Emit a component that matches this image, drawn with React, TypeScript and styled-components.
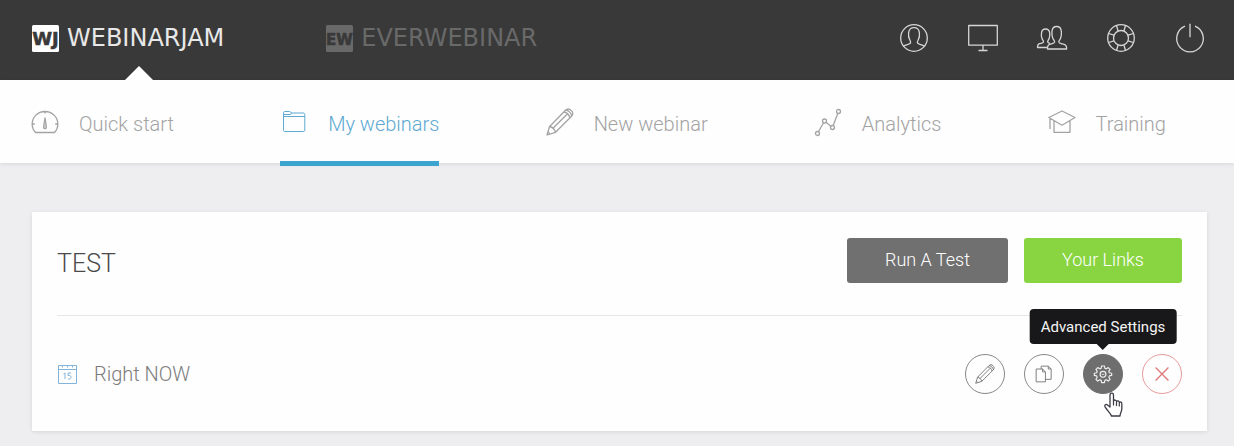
import React from "react";
import styled, { createGlobalStyle, css } from "styled-components";

const GlobalStyle = createGlobalStyle`
  * { box-sizing: border-box; }
  body {
    margin: 0;
    background: #eeeef0;
    font-family: Roboto, "Liberation Sans", sans-serif;
    font-weight: 300;
  }
  button { font: inherit; cursor: pointer; }
`;

const TopBar = styled.header`
  display: flex;
  align-items: center;
  height: 80px;
  padding: 0 29px 4px 32px;
  background: #393939;
`;

const Brands = styled.nav`
  display: flex;
  flex: 1;
  gap: 102px;
  height: 76px;
`;

const Brand = styled.a<{ $active?: boolean }>`
  position: relative;
  display: flex;
  align-items: center;
  gap: 8px;
  color: ${(p) => (p.$active ? "#e8e8e8" : "#696969")};
  font-family: "DejaVu Sans", sans-serif;
  font-size: 24px;
  font-weight: 400;
  line-height: 28px;
  text-decoration: none;

  ${(p) =>
    p.$active &&
    css`
      &::after {
        content: "";
        position: absolute;
        bottom: -4px;
        left: 93px;
        border: 14px solid transparent;
        border-top-width: 0;
        border-bottom-color: #fff;
      }
    `}
`;

const BadgeText = styled.text`
  font-family: "DejaVu Sans", sans-serif;
  font-weight: 700;
  fill: #393939;
  stroke: #393939;
  stroke-width: 0.6;
`;

const Tools = styled.div`
  display: flex;
  gap: 39px;
`;

const ToolButton = styled.button`
  display: flex;
  padding: 0;
  border: 0;
  background: none;
  color: #d6d6d6;
`;

const Icon = styled.svg`
  display: block;
  flex: none;
  overflow: visible;
  fill: none;
  stroke: currentColor;
  stroke-width: 1.3;
  stroke-linejoin: round;
`;

const TabBar = styled.nav`
  display: flex;
  justify-content: space-between;
  height: 83px;
  padding: 0 68px 0 31px;
  background: #fefefe;
  box-shadow: 0 1px 4px rgba(0, 0, 0, 0.1);
`;

const Tab = styled.a<{ $active?: boolean }>`
  position: relative;
  display: flex;
  align-items: center;
  gap: 20px;
  padding-top: 4px;
  color: ${(p) => (p.$active ? "#5fa9d2" : "#a3a3a3")};
  font-size: 20px;
  line-height: 24px;
  text-decoration: none;
  white-space: nowrap;

  ${(p) =>
    p.$active &&
    css`
      &::after {
        content: "";
        position: absolute;
        right: 0;
        bottom: -3px;
        left: 0;
        height: 5px;
        background: #3ba5cf;
      }
    `}
`;

const Page = styled.main`
  padding: 49px 27px 16px 32px;
`;

const Card = styled.section`
  padding: 26px 25px 37px;
  background: #fefefe;
  box-shadow: 0 1px 4px rgba(0, 0, 0, 0.1);
`;

const CardHeader = styled.div`
  display: flex;
  align-items: flex-start;
  gap: 16px;
  padding-bottom: 32px;
  border-bottom: 1px solid #e6e6e6;
`;

const Title = styled.h1`
  flex: 1;
  margin: 0;
  padding-top: 10px;
  color: #4a4a4a;
  font-size: 25px;
  font-weight: 300;
  line-height: 32px;
`;

const ActionButton = styled.button<{ $primary?: boolean }>`
  height: 45px;
  padding: 0 38px 1px;
  border: 0;
  border-radius: 3px;
  background: ${(p) => (p.$primary ? "#89d541" : "#707070")};
  color: #fff;
  font-size: 18px;
  font-weight: 300;
  line-height: 24px;
`;

const Session = styled.div`
  display: flex;
  align-items: center;
  gap: 16px;
  padding-top: 38px;
`;

const SessionName = styled.span`
  flex: 1;
  color: #7c7c7c;
  font-size: 20px;
  line-height: 24px;
`;

const SessionActions = styled.div`
  display: flex;
  gap: 19px;
`;

const ActionSlot = styled.div`
  position: relative;
`;

const tones = {
  plain: css`border-color: #888; background: none; color: #777;`,
  solid: css`border-color: #6e6e6e; background: #6e6e6e; color: #f0f0f0;`,
  danger: css`border-color: #e69a9a; background: none; color: #de7777;`,
};

const RoundButton = styled.button<{ $tone: keyof typeof tones }>`
  display: flex;
  align-items: center;
  justify-content: center;
  width: 40px;
  height: 40px;
  padding: 0;
  border: 1px solid;
  border-radius: 50%;
  ${(p) => tones[p.$tone]}
`;

const Tooltip = styled.span`
  position: absolute;
  bottom: 50px;
  left: 50%;
  padding: 6px 11px 5px;
  transform: translateX(-50%);
  border-radius: 4px;
  background: #18181a;
  color: #f4f4f4;
  font-size: 15px;
  font-weight: 400;
  line-height: 24px;
  white-space: nowrap;

  &::after {
    content: "";
    position: absolute;
    top: 100%;
    left: 50%;
    margin-left: -6px;
    border: 6px solid transparent;
    border-top-color: #18181a;
    border-bottom-width: 0;
  }
`;

const Pointer = styled.svg`
  position: absolute;
  top: 38px;
  left: 20px;
  pointer-events: none;
`;

function Badge({ text, size, color }: { text: string; size: number; color: string }) {
  return (
    <svg width="27" height="27" viewBox="0 0 27 27" aria-hidden="true">
      <rect width="27" height="27" rx="1.5" fill={color} />
      <BadgeText x="13.5" y="20" fontSize={size} textAnchor="middle">
        {text}
      </BadgeText>
    </svg>
  );
}

const PencilShape = () => (
  <>
    <path d="M1 27l2.600-8.500L19.500 2.300c2-2 4-1.400 5.700.1 1.900 1.800 2.200 3.900.3 5.900L9.500 24.300z" />
    <path d="M3.600 18.500c2.700.6 5 2.600 5.900 5.800M6.500 20.800L21.800 5.500M18 4c3 .4 5 2.500 5.800 5.700M20 2.200c3 .7 5 2.700 5.700 5.800M2 24l2 2" />
  </>
);

const tools = [
  {
    label: "Account",
    art: (
      <>
        <circle cx="15" cy="15" r="13.300" />
        <path d="M4.500 23c2.500-1.500 6.200-1.600 6.900-2.800.6-1.300 0-2.300-.7-3.500-1.100-2-1.400-4.500-1.100-7 .4-3.200 2.400-5 5.400-5s5 1.800 5.400 5c.3 2.500 0 5-1.100 7-.7 1.200-1.300 2.200-.7 3.500.7 1.200 4.400 1.300 6.900 2.800" />
      </>
    ),
  },
  {
    label: "Presentation room",
    art: <path d="M.7 2.500h28.600v19.700H.700zM15 22.200v5M10.500 27.500h9" />,
  },
  {
    label: "Members",
    art: (
      <>
        <path d="M10.500 26H29.600c.2-2.800-.5-4-2.500-4.600-2.500-.8-5-.8-5.300-2.200-.2-1.500 1.200-2.300 1.800-4 .8-2 1-4.500.7-7C24 5 22.300 3.500 19.700 3.500S15.300 5 15 8.200c-.3 2.500 0 5 .8 7 .6 1.700 2 2.500 1.800 4-.3 1.400-2.800 1.500-5 2.200-2 .6-2.200 1.800-2.100 4.600z" />
        <path d="M10.500 24.500H.500c0-2.300.3-3.300 2-3.800 2-.6 3.800-.7 4-1.900.1-1.200-1-2-1.500-3.300-.6-1.600-.8-3.500-.5-5.500.3-2.700 1.700-4 4-4s3.900 1.300 4.200 4c.2 2 0 3.900-.6 5.500-.5 1.300-1.500 2.100-1.400 3.300.1.800 1 1.200 2.200 1.500" />
      </>
    ),
  },
  {
    label: "Help",
    art: (
      <>
        <circle cx="15" cy="15" r="13.300" />
        <circle cx="15" cy="15" r="7.500" />
        <path d="M10.500 2.500l1.600 5.500M19.500 2.500l-1.600 5.500M10.500 27.500l1.600-5.500M19.500 27.500l-1.600-5.500M2.500 10.500l5.500 1.600M2.500 19.500l5.500-1.600M27.500 10.500l-5.500 1.600M27.500 19.500l-5.500-1.600" />
      </>
    ),
  },
  {
    label: "Log out",
    art: <path d="M10 3.200A13.300 13.300 0 1 0 20 3.200M15 .8v13.500" />,
  },
];

const tabs = [
  {
    label: "Quick start",
    art: (
      <>
        <path d="M4.500 24.500h19c2-2 3.300-4.800 3.300-8.200C26.800 9 21.200 3.500 14 3.500S1.200 9 1.200 16.300c0 3.400 1.300 6.200 3.300 8.200zM1.200 16h2.600M24.200 16h2.600M14 3.500v2" />
        <path d="M14 10l-1.300 8c-.3 2 .4 2.700 1.300 2.700s1.600-.7 1.300-2.700z" fill="currentColor" fillOpacity="0.4" />
      </>
    ),
  },
  {
    label: "My webinars",
    active: true,
    art: <path d="M3.500 22V5c0-1 .5-1.500 1.500-1.500h4.500c1 0 1.300.5 1.600 1.500h12c1.200 0 1.700.6 1.700 1.700V22c0 1-.5 1.500-1.500 1.500H5C4 23.500 3.500 23 3.500 22zM3.500 8.500h21.300M4 6.500h6.500l1-1.500" strokeWidth="1" />,
  },
  { label: "New webinar", art: <PencilShape /> },
  {
    label: "Analytics",
    art: (
      <>
        <circle cx="3.500" cy="25.500" r="2" />
        <circle cx="10.500" cy="13" r="2" />
        <circle cx="18.500" cy="19.500" r="2" />
        <circle cx="24.500" cy="3.500" r="2" />
        <path d="M4.500 23.700l5-9M12 14.300l5 4M19.200 17.600l4.600-12.200" />
      </>
    ),
  },
  {
    label: "Training",
    art: <path d="M14 3L.800 9.500 14 17.200l13-7.700zM6 12.500v11.800h16V12.500M2 10v11" />,
  },
];

const sessionActions: {
  label: string;
  tone: keyof typeof tones;
  art: React.ReactNode;
}[] = [
  { label: "Edit", tone: "plain", art: <PencilShape /> },
  {
    label: "Duplicate",
    tone: "plain",
    art: <path d="M3 7h9l4 4v14H3zM12 7v4h4M10 7V3h10l4 4v14.500h-8M20 3v4h4" />,
  },
  {
    label: "Advanced Settings",
    tone: "solid",
    art: (
      <>
        <path
          d="M11.800 1.500h4.400l.7 3.600 2.200.9 3.100-2 2.800 2.800-2 3.100.9 2.200 3.600.7v3.400l-3.600.7-.9 2.200 2 3.100-2.800 2.800-3.100-2-2.200.9-.7 3.600h-4.400l-.7-3.600-2.200-.9-3.100 2L3 22.200l2-3.100-.9-2.200-3.600-.7v-3.400l3.600-.7.9-2.200-2-3.100L5.800 4l3.100 2 2.200-.9z"
          strokeWidth="1.800"
        />
        <circle cx="14" cy="14.500" r="4.500" strokeWidth="1.800" />
        <path d="M12 14.500h4" />
      </>
    ),
  },
  { label: "Delete", tone: "danger", art: <path d="M4 4l20 20M24 4L4 24" strokeWidth="2" /> },
];

export default function App() {
  return (
    <>
      <GlobalStyle />
      <TopBar>
        <Brands aria-label="Products">
          <Brand href="#webinarjam" $active>
            <Badge text="WJ" size={18} color="#fff" />
            WEBINARJAM
          </Brand>
          <Brand href="#everwebinar">
            <Badge text="EW" size={15} color="#696969" />
            EVERWEBINAR
          </Brand>
        </Brands>
        <Tools>
          {tools.map((tool) => (
            <ToolButton key={tool.label} aria-label={tool.label}>
              <Icon width="30" height="30" viewBox="0 0 30 30">
                {tool.art}
              </Icon>
            </ToolButton>
          ))}
        </Tools>
      </TopBar>
      <TabBar aria-label="Sections">
        {tabs.map((tab) => (
          <Tab key={tab.label} href="#" $active={tab.active}>
            <Icon width="28" height="32" viewBox="0 0 28 32">
              {tab.art}
            </Icon>
            {tab.label}
          </Tab>
        ))}
      </TabBar>
      <Page>
        <Card>
          <CardHeader>
            <Title>TEST</Title>
            <ActionButton>Run A Test</ActionButton>
            <ActionButton $primary>Your Links</ActionButton>
          </CardHeader>
          <Session>
            <Icon width="21" height="20" viewBox="0 0 21 20" color="#83b3d8">
              <path d="M1.500 1.500h18v18h-18zM1.500 5.500h18M5.500 1v2.500M10.500 1v2.500M15.500 1v2.500" strokeWidth="1" />
              <path d="M6.500 10l1.500-1v6M14 9h-3v2.500h1.500c2 0 2 3.500 0 3.500H11" strokeWidth="1" />
            </Icon>
            <SessionName>Right NOW</SessionName>
            <SessionActions>
              {sessionActions.map((action) => (
                <ActionSlot key={action.label}>
                  <RoundButton $tone={action.tone} aria-label={action.label}>
                    <Icon
                      width={action.tone === "plain" ? 20 : 18}
                      height={action.tone === "plain" ? 20 : 18}
                      viewBox="0 0 28 28"
                    >
                      {action.art}
                    </Icon>
                  </RoundButton>
                  {action.tone === "solid" && (
                    <>
                      <Tooltip role="tooltip">{action.label}</Tooltip>
                      <Pointer width="20" height="26" viewBox="0 0 20 26">
                        <path
                          d="M7 15V3c0-2.600 3.500-2.600 3.500 0v6c.6-1.500 2.800-1.200 3 .5.800-1 2.600-.7 2.800.9 1-.9 2.500-.3 2.500 1.300V17c0 2.500-1.800 4-1.800 7H8.500c-.5-2.500-4-5-6.300-8.800C.800 13 3 11.500 4.500 13z"
                          fill="#fff"
                          stroke="#3c3c44"
                          strokeWidth="1.300"
                          strokeLinejoin="round"
                        />
                        <path d="M10.500 9v4.500M13.500 10v4M16.300 11v3.500" stroke="#3c3c44" strokeWidth="1.200" />
                      </Pointer>
                    </>
                  )}
                </ActionSlot>
              ))}
            </SessionActions>
          </Session>
        </Card>
      </Page>
    </>
  );
}
